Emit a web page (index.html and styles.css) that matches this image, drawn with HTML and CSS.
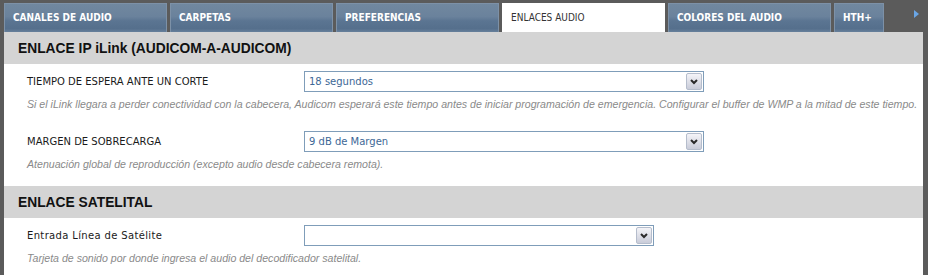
FILE: index.html
```html
<!DOCTYPE html>
<html lang="es">
<head>
<meta charset="utf-8">
<title>Enlaces audio</title>
<link rel="stylesheet" href="styles.css">
</head>
<body>
<nav class="tabs">
  <a class="tab">CANALES DE AUDIO</a>
  <a class="tab">CARPETAS</a>
  <a class="tab">PREFERENCIAS</a>
  <a class="tab active">ENLACES AUDIO</a>
  <a class="tab">COLORES DEL AUDIO</a>
  <a class="tab tab-short">HTH+</a>
  <span class="tab-next"></span>
</nav>
<main class="panel">
  <section class="group">
    <h2 class="band">ENLACE IP iLink (AUDICOM-A-AUDICOM)</h2>
    <div class="field">
      <div class="field-row">
        <label class="label">TIEMPO DE ESPERA ANTE UN CORTE</label>
        <div class="select w400"><span class="select-value">18 segundos</span><span class="select-btn"><svg width="8" height="6" viewBox="0 0 8 6"><path d="M1 1 L4 4 L7 1" fill="none" stroke="#2b2b2b" stroke-width="2"/></svg></span></div>
      </div>
      <p class="desc">Si el iLink llegara a perder conectividad con la cabecera, Audicom esperará este tiempo antes de iniciar programación de emergencia. Configurar el buffer de WMP a la mitad de este tiempo.</p>
    </div>
    <div class="field">
      <div class="field-row">
        <label class="label">MARGEN DE SOBRECARGA</label>
        <div class="select w400"><span class="select-value">9 dB de Margen</span><span class="select-btn"><svg width="8" height="6" viewBox="0 0 8 6"><path d="M1 1 L4 4 L7 1" fill="none" stroke="#2b2b2b" stroke-width="2"/></svg></span></div>
      </div>
      <p class="desc">Atenuación global de reproducción (excepto audio desde cabecera remota).</p>
    </div>
  </section>
  <section class="group">
    <h2 class="band">ENLACE SATELITAL</h2>
    <div class="field">
      <div class="field-row">
        <label class="label label-mixed">Entrada Línea de Satélite</label>
        <div class="select w350"><span class="select-value"></span><span class="select-btn"><svg width="8" height="6" viewBox="0 0 8 6"><path d="M1 1 L4 4 L7 1" fill="none" stroke="#2b2b2b" stroke-width="2"/></svg></span></div>
      </div>
      <p class="desc">Tarjeta de sonido por donde ingresa el audio del decodificador satelital.</p>
    </div>
  </section>
</main>
</body>
</html>
```
FILE: styles.css
```css
html, body {
  margin: 0;
  padding: 0;
}
body {
  background: #5b5b5b;
  height: 275px;
  overflow: hidden;
}
.tabs {
  display: flex;
  align-items: stretch;
  gap: 3px;
  padding: 3px 0 0 4px;
  height: 29px;
}
.tab {
  box-sizing: border-box;
  width: 163px;
  height: 29px;
  padding: 8px 0 0 8px;
  border: 1px solid #7d91a7;
  border-bottom: none;
  background: linear-gradient(#71889f 0%, #6a829c 45%, #5b7592 60%, #556f8c 88%, #67809b 100%);
  color: #ffffff;
  font-family: "DejaVu Sans Condensed", "DejaVu Sans", sans-serif;
  font-stretch: condensed;
  font-weight: bold;
  font-size: 10px;
  line-height: 12px;
  white-space: nowrap;
}
.tab.active {
  background: #ffffff;
  border-color: #ffffff;
  color: #333333;
  font-weight: normal;
}
.tab-short {
  width: 50px;
}
.tab-next {
  margin: 7px 9px 0 auto;
  width: 0;
  height: 0;
  border-top: 4px solid transparent;
  border-bottom: 4px solid transparent;
  border-left: 5px solid #6aa6e6;
}
.panel {
  margin: 0 5px 0 4px;
  background: #ffffff;
  height: 243px;
  overflow: hidden;
}
.group {
  padding-bottom: 2px;
}
.band {
  margin: 0;
  height: 32px;
  padding-left: 14px;
  background: #d4d4d4;
  color: #111111;
  font-family: "Liberation Sans", Arial, sans-serif;
  font-weight: bold;
  font-size: 13.8px;
  line-height: 33px;
}
.field {
  padding: 7px 0 8px 23px;
}
.field-row {
  display: grid;
  grid-template-columns: 277px auto;
  align-items: center;
  height: 21px;
}
.label {
  font-family: "DejaVu Sans", sans-serif;
  font-size: 10px;
  color: #1a1a1a;
}
.label-mixed {
  letter-spacing: 0.35px;
}
.select {
  box-sizing: border-box;
  height: 21px;
  border: 1px solid #7f9db9;
  background: #ffffff;
  display: flex;
  align-items: center;
  justify-content: space-between;
  padding: 0 1px 0 4px;
}
.w400 { width: 400px; }
.w350 { width: 350px; }
.select-value {
  font-family: "DejaVu Sans", sans-serif;
  font-size: 10px;
  color: #3d6796;
}
.select-btn {
  box-sizing: border-box;
  width: 16px;
  height: 17px;
  border: 1px solid #b5bdcc;
  border-radius: 2px;
  background: linear-gradient(#f4f4f8, #c9ccd9);
  display: flex;
  align-items: center;
  justify-content: center;
}
.desc {
  margin: 0;
  height: 24px;
  line-height: 25px;
  font-family: "Liberation Sans", Arial, sans-serif;
  font-style: italic;
  font-size: 10.6px;
  color: #8a8a8a;
  white-space: nowrap;
}
```
